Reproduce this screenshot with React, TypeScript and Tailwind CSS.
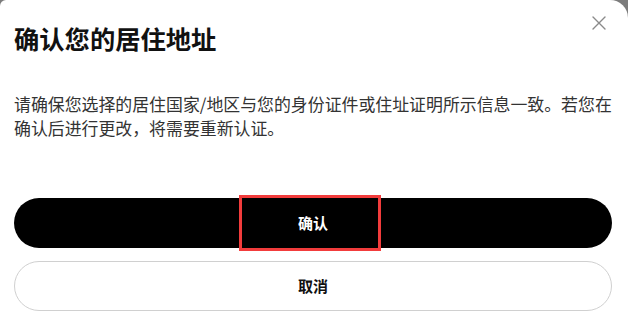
import React from "react";

export default function App() {
  return (
    <div className="relative w-[628px] h-[329px] bg-[#7c7c7c] overflow-hidden" style={{ fontFamily: '"Noto Sans CJK SC", "Noto Sans", sans-serif' }}>
      <div className="h-full bg-white rounded-tl-[6px] rounded-tr-[18px] px-[14px]">
        <div className="flex justify-between items-start">
          <h1 className="mt-[22px] text-[25.3px] leading-[32px] font-bold text-[#111]">确认您的居住地址</h1>
          <button className="mt-[15px] mr-[7px] w-[16px] h-[16px] flex items-center justify-center">
            <svg width="16" height="16" viewBox="0 0 16 16" fill="none" stroke="#8a8a8a" strokeWidth="1.4" strokeLinecap="round">
              <path d="M2 2L14 14M14 2L2 14" />
            </svg>
          </button>
        </div>
        <p className="mt-[38px] text-[16.9px] leading-[24px] text-[#333]">
          请确保您选择的居住国家/地区与您的身份证件或住址证明所示信息一致。若您在确认后进行更改，将需要重新认证。
        </p>
        <div className="mt-[58px] flex flex-col gap-[13px] pr-[2px]">
          <button className="h-[50px] w-full rounded-full bg-black text-white text-[15px] font-semibold flex items-center justify-center">
            确认
          </button>
          <button className="h-[50px] w-full rounded-full bg-white border border-[#d0d0d0] text-[#111] text-[15px] font-semibold flex items-center justify-center">
            取消
          </button>
        </div>
      </div>
      <div className="absolute left-[239px] top-[195px] w-[142px] h-[56px] border-[3px] border-[#f23c3c] pointer-events-none" />
    </div>
  );
}
